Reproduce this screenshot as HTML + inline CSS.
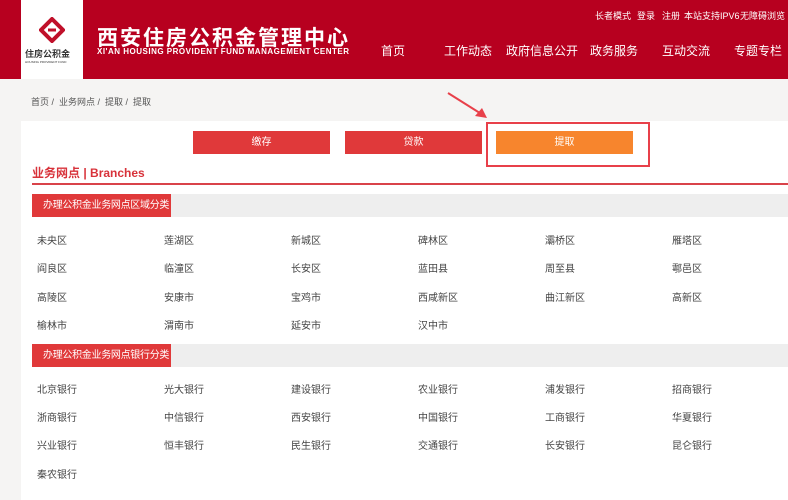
<!DOCTYPE html>
<html><head><meta charset="utf-8"><style>
*{margin:0;padding:0;box-sizing:border-box}
body{width:788px;height:500px;overflow:hidden;background:#f5f4f3;font-family:"Liberation Sans","Noto Sans CJK SC",sans-serif;position:relative}
.hdr{position:absolute;left:0;top:0;width:788px;height:79px;background:#b7001f}
.logo{position:absolute;left:21px;top:0;width:62px;height:79px;background:#fff}
.abs{position:absolute;white-space:nowrap}
.nav{color:#fff;font-size:12px;top:42px}
.top{color:#fff;font-size:9px;top:9px}
.panel{position:absolute;left:21px;top:121px;width:767px;height:379px;background:#fff}
.btn{position:absolute;top:131px;width:137px;height:23px;background:#e0393a;color:#fff;font-size:10px;text-align:center;line-height:23px}
.bar{position:absolute;left:32px;width:756px;height:23px;background:#eeeeee}
.bar span{display:block;width:139px;height:23px;background:#e0393a;color:#fff;font-size:10px;line-height:23px;padding-left:11px;white-space:nowrap;overflow:hidden;letter-spacing:-0.3px}
.it{position:absolute;font-size:10px;color:#444;white-space:nowrap}
</style></head><body>
<div class="hdr"></div>
<div class="logo">
<svg style="position:absolute;left:18px;top:17px" width="26" height="26" viewBox="0 0 26 26"><g fill="none" stroke="#c0102a" stroke-width="4"><path d="M13 2 L24 13 L13 24 L2 13 Z"/></g><path d="M13 8 L18 13 L13 18 L8 13Z" fill="#fff"/><path d="M9 13 H17" stroke="#c0102a" stroke-width="3"/></svg>
<div class="abs" style="left:4px;top:47px;font-size:9px;font-weight:bold;color:#333">住房公积金</div>
<div class="abs" style="left:4px;top:60px;font-size:3px;color:#333">HOUSING PROVIDENT FUND</div>
</div>
<div class="abs" style="left:97px;top:22px;color:#fff;font-size:21px;font-weight:bold;letter-spacing:2px">西安住房公积金管理中心</div>
<div class="abs" style="left:97px;top:47px;color:#fff;font-size:8px;font-weight:bold;letter-spacing:0.5px">XI'AN HOUSING PROVIDENT FUND MANAGEMENT CENTER</div>
<div class="abs top" style="left:595px">长者模式</div>
<div class="abs top" style="left:637px">登录</div>
<div class="abs top" style="left:662px">注册</div>
<div class="abs top" style="left:684px">本站支持IPV6</div>
<div class="abs top" style="left:740px">无障碍浏览</div>
<div class="abs nav" style="left:381px">首页</div>
<div class="abs nav" style="left:444px">工作动态</div>
<div class="abs nav" style="left:506px">政府信息公开</div>
<div class="abs nav" style="left:590px">政务服务</div>
<div class="abs nav" style="left:662px">互动交流</div>
<div class="abs nav" style="left:734px">专题专栏</div>
<div class="abs" style="left:31px;top:95px;font-size:9px;color:#555">首页 / &nbsp;业务网点 / &nbsp;提取 / &nbsp;提取</div>
<div class="panel"></div>
<div class="btn" style="left:193px">缴存</div>
<div class="btn" style="left:345px">贷款</div>
<div class="btn" style="left:496px;background:#f7852d">提取</div>
<div class="abs" style="left:486px;top:122px;width:164px;height:45px;border:2px solid #e8404a"></div>
<svg class="abs" style="left:445px;top:90px" width="45" height="30"><path d="M3 3 L38 25" stroke="#e8404a" stroke-width="2"/><path d="M42 28 L30 26 L37 18Z" fill="#e8404a"/></svg>
<div class="abs" style="left:32px;top:164px;font-size:12px;font-weight:bold;color:#d8323a">业务网点 | Branches</div>
<div class="abs" style="left:32px;top:183px;width:756px;height:2px;background:#d9434a"></div>
<div class="bar" style="top:194px"><span>办理公积金业务网点区域分类</span></div>
<div class="bar" style="top:344px"><span>办理公积金业务网点银行分类</span></div>
<div class="it" style="left:37px;top:232px">未央区</div><div class="it" style="left:164px;top:232px">莲湖区</div><div class="it" style="left:291px;top:232px">新城区</div><div class="it" style="left:418px;top:232px">碑林区</div><div class="it" style="left:545px;top:232px">灞桥区</div><div class="it" style="left:672px;top:232px">雁塔区</div>
<div class="it" style="left:37px;top:260px">阎良区</div><div class="it" style="left:164px;top:260px">临潼区</div><div class="it" style="left:291px;top:260px">长安区</div><div class="it" style="left:418px;top:260px">蓝田县</div><div class="it" style="left:545px;top:260px">周至县</div><div class="it" style="left:672px;top:260px">鄠邑区</div>
<div class="it" style="left:37px;top:289px">高陵区</div><div class="it" style="left:164px;top:289px">安康市</div><div class="it" style="left:291px;top:289px">宝鸡市</div><div class="it" style="left:418px;top:289px">西咸新区</div><div class="it" style="left:545px;top:289px">曲江新区</div><div class="it" style="left:672px;top:289px">高新区</div>
<div class="it" style="left:37px;top:317px">榆林市</div><div class="it" style="left:164px;top:317px">渭南市</div><div class="it" style="left:291px;top:317px">延安市</div><div class="it" style="left:418px;top:317px">汉中市</div>
<div class="it" style="left:37px;top:381px">北京银行</div><div class="it" style="left:164px;top:381px">光大银行</div><div class="it" style="left:291px;top:381px">建设银行</div><div class="it" style="left:418px;top:381px">农业银行</div><div class="it" style="left:545px;top:381px">浦发银行</div><div class="it" style="left:672px;top:381px">招商银行</div>
<div class="it" style="left:37px;top:409px">浙商银行</div><div class="it" style="left:164px;top:409px">中信银行</div><div class="it" style="left:291px;top:409px">西安银行</div><div class="it" style="left:418px;top:409px">中国银行</div><div class="it" style="left:545px;top:409px">工商银行</div><div class="it" style="left:672px;top:409px">华夏银行</div>
<div class="it" style="left:37px;top:437px">兴业银行</div><div class="it" style="left:164px;top:437px">恒丰银行</div><div class="it" style="left:291px;top:437px">民生银行</div><div class="it" style="left:418px;top:437px">交通银行</div><div class="it" style="left:545px;top:437px">长安银行</div><div class="it" style="left:672px;top:437px">昆仑银行</div>
<div class="it" style="left:37px;top:466px">秦农银行</div>
</body></html>
